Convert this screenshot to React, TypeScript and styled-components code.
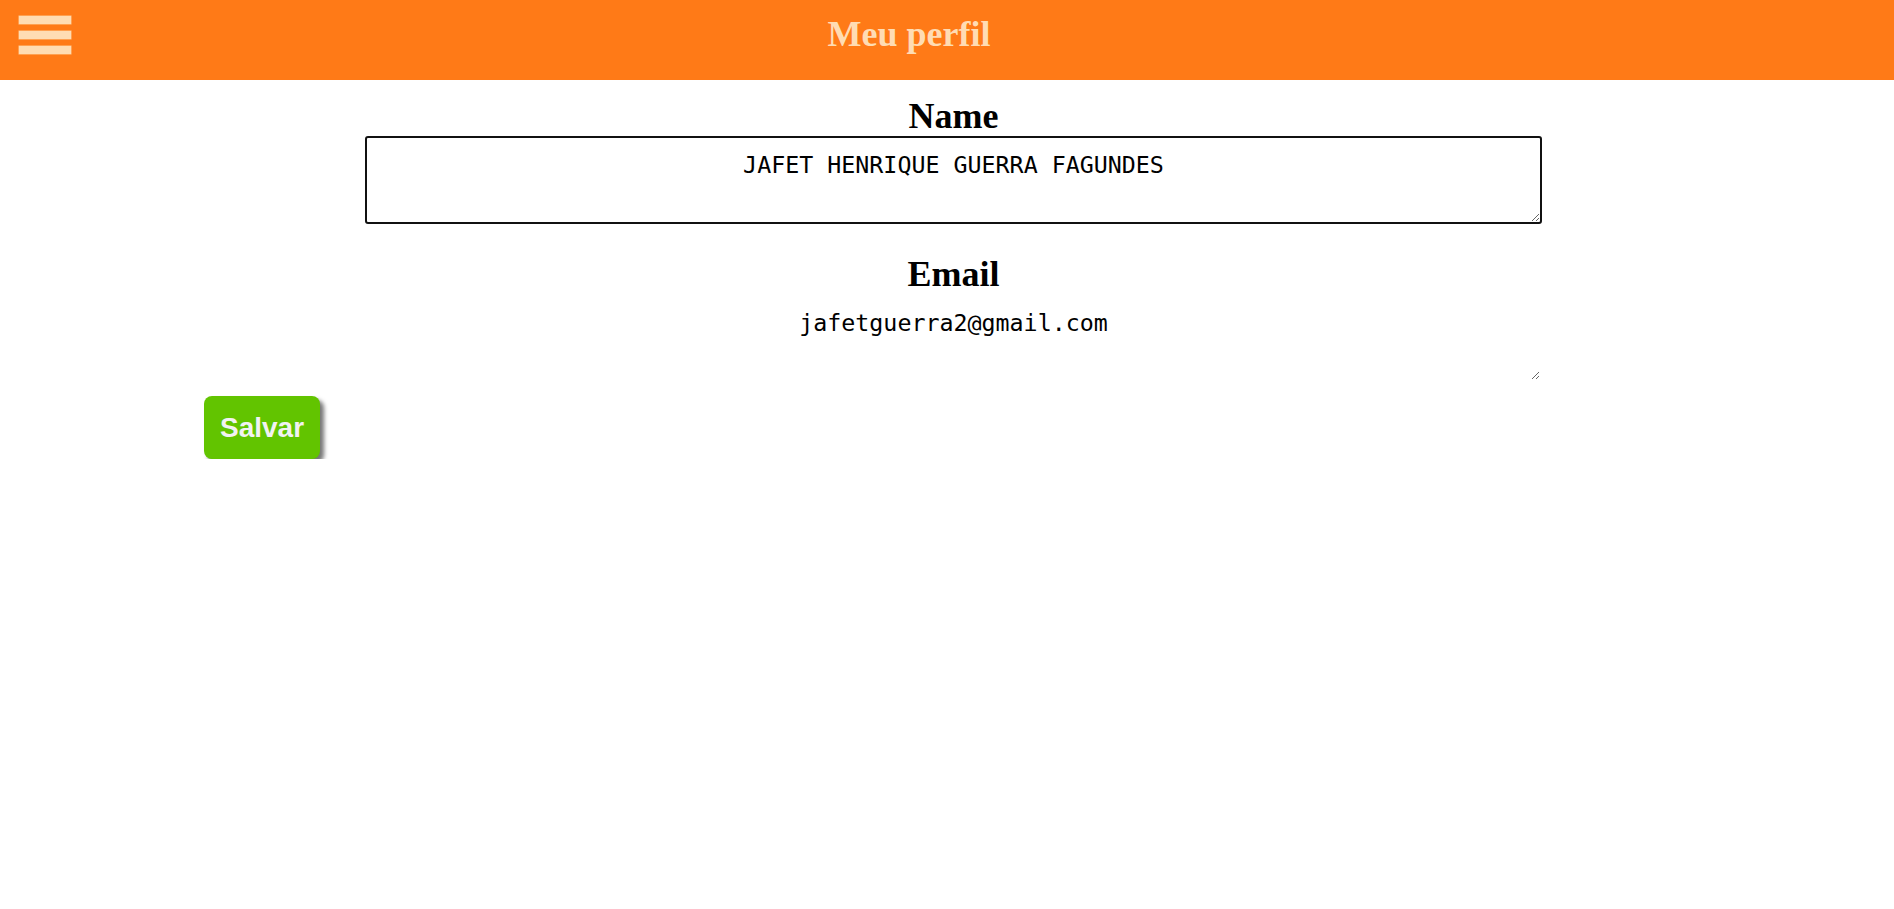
import styled, { createGlobalStyle } from "styled-components";

const GlobalStyle = createGlobalStyle`
    body {
        margin: 0;
        background: #ffffff;
        font-family: "Liberation Serif", "Times New Roman", serif;
    }
`;

const Header = styled.header`
    height: 80px;
    box-sizing: border-box;
    background: #ff7a17;
    display: flex;
    align-items: flex-start;
    padding: 14px 19px 0;
`;

const MenuButton = styled.button`
    display: flex;
    flex-direction: column;
    gap: 7px;
    margin-top: 2px;
    padding: 0;
    background: none;
    border: none;
    cursor: pointer;

    span {
        display: block;
        width: 52px;
        height: 8px;
        background: #ffdcb3;
        box-shadow: 0 0 0 0.5px #ffc58a;
    }
`;

const Title = styled.h1`
    flex: 1;
    margin: 0;
    padding-right: 128px;
    text-align: center;
    font-size: 36px;
    line-height: 41px;
    font-weight: 700;
    color: #ffdcb3;
`;

const Main = styled.main`
    padding: 16px 0 0 204px;
`;

const Fields = styled.div`
    width: 1177px;
    margin-left: 161px;
    display: flex;
    flex-direction: column;
`;

const Label = styled.h2<{ gapTop?: number }>`
    margin: ${(props) => props.gapTop || 0}px 0 0;
    text-align: center;
    font-size: 36px;
    line-height: 40px;
    font-weight: 700;
    color: #000;
`;

const Field = styled.textarea<{ bordered?: boolean }>`
    box-sizing: border-box;
    width: 100%;
    height: 88px;
    padding: 13px 8px;
    border: 2px solid ${(props) => (props.bordered ? "#111" : "transparent")};
    border-radius: 3px;
    outline: none;
    background: #fff;
    text-align: center;
    font-family: "DejaVu Sans Mono", monospace;
    font-size: 23.3px;
    color: #000;
`;

const SaveButton = styled.button`
    margin-top: 14px;
    padding: 15px 16px;
    border: none;
    border-radius: 8px;
    background: #62c400;
    color: #f2f2f2;
    font-family: "Liberation Sans", Arial, sans-serif;
    font-size: 28px;
    line-height: 33px;
    font-weight: 700;
    box-shadow: 4px 4px 4px #767676;
    cursor: pointer;
`;

const App = () => {
    return (
        <>
            <GlobalStyle />
            <Header>
                <MenuButton aria-label="menu">
                    <span />
                    <span />
                    <span />
                </MenuButton>
                <Title>Meu perfil</Title>
            </Header>
            <Main>
                <Fields>
                    <Label>Name</Label>
                    <Field
                        bordered
                        defaultValue="JAFET HENRIQUE GUERRA FAGUNDES"
                    />
                    <Label gapTop={30}>Email</Label>
                    <Field defaultValue="jafetguerra2@gmail.com" />
                </Fields>
                <SaveButton>Salvar</SaveButton>
            </Main>
        </>
    );
};

export default App;
